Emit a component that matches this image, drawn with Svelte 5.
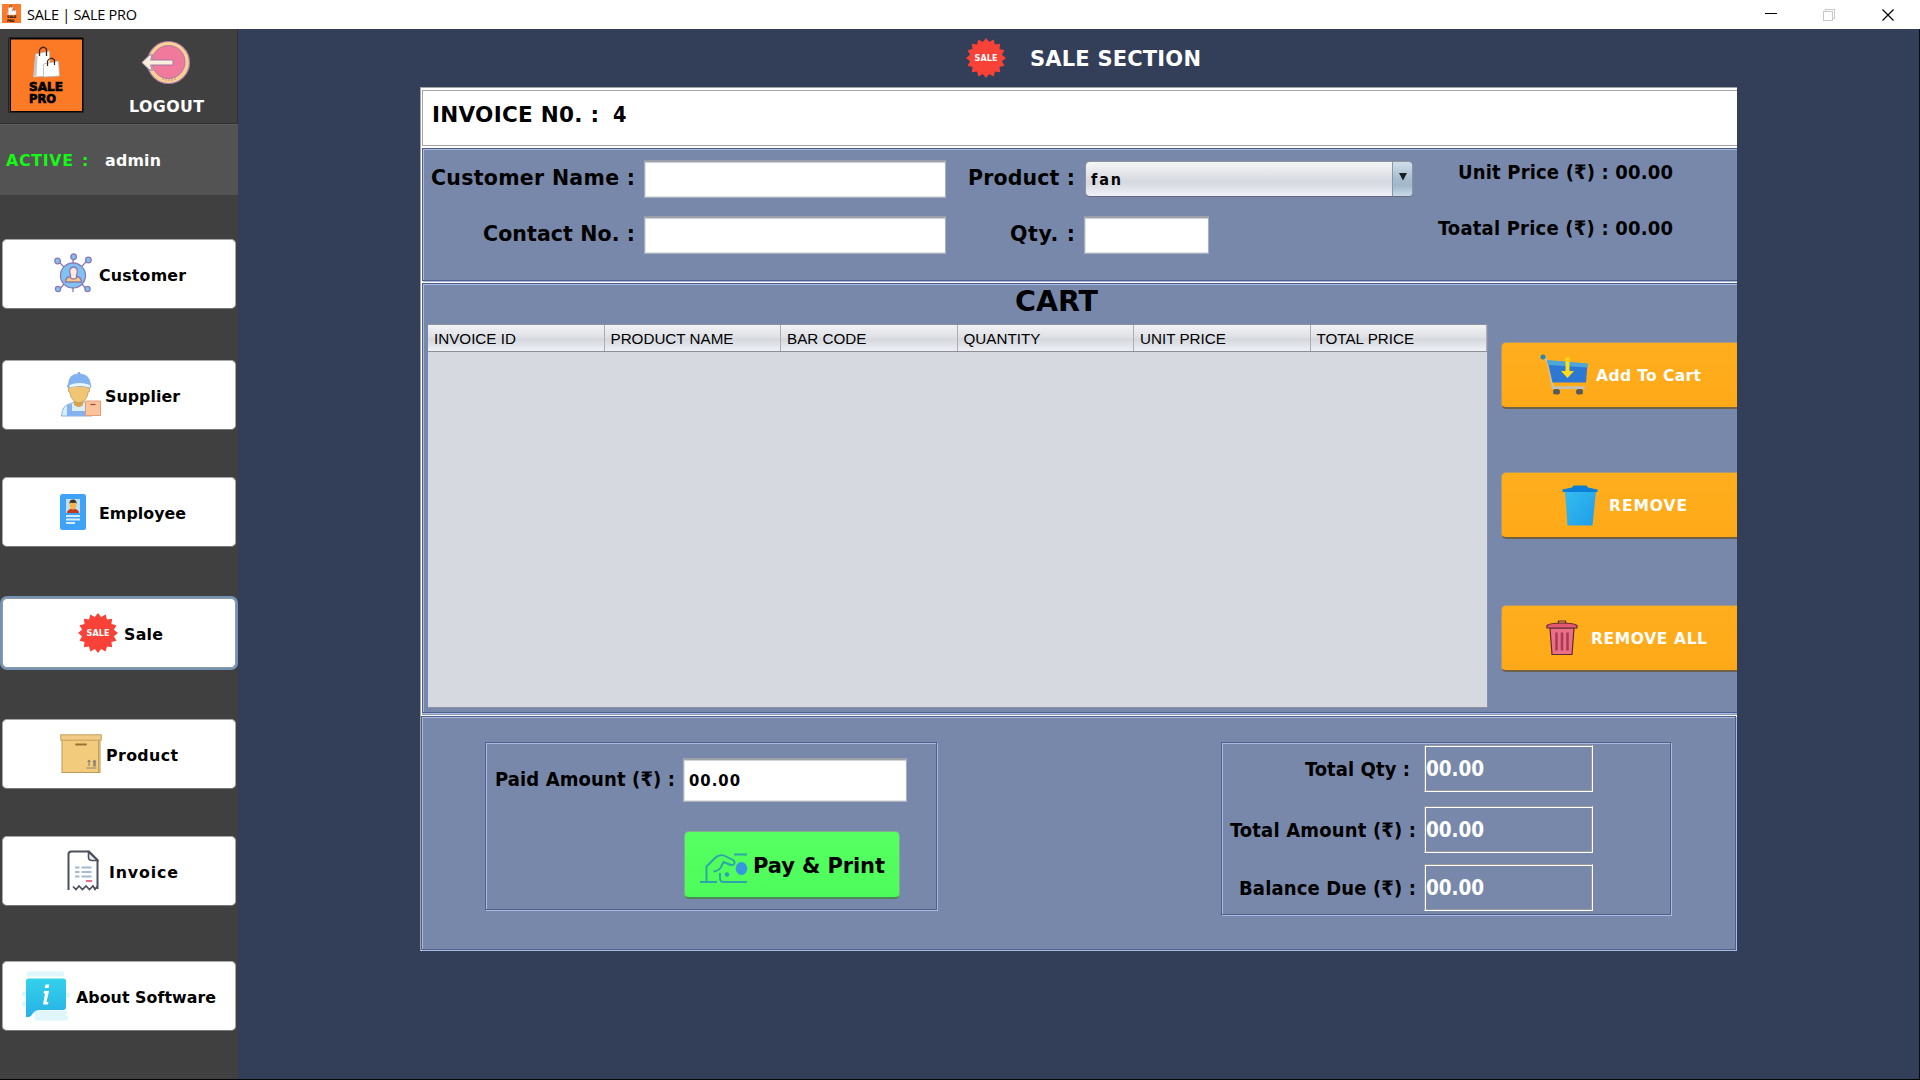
<script>
  const nav = [
    { id: 'customer', label: 'Customer', w: 87 },
    { id: 'supplier', label: 'Supplier', w: 75 },
    { id: 'employee', label: 'Employee', w: 87 },
    { id: 'sale', label: 'Sale', w: 39 },
    { id: 'product', label: 'Product', w: 72 },
    { id: 'invoice', label: 'Invoice', w: 69 },
    { id: 'about', label: 'About Software', w: 140 }
  ];
  const columns = ['INVOICE ID', 'PRODUCT NAME', 'BAR CODE', 'QUANTITY', 'UNIT PRICE', 'TOTAL PRICE'];
  const totals = [
    { label: 'Total Qty :', w: 105, cls: 'qty' },
    { label: 'Total Amount (₹) :', w: 186, cls: 'amount' },
    { label: 'Balance Due (₹) :', w: 177, cls: 'due' }
  ];

  // Spiked outline of the sale badge, centred on 20,20.
  const spikes = 16;
  const burst = Array.from({ length: spikes * 2 }, (_, i) => {
    const r = i % 2 ? 16.2 : 20;
    const a = (i * Math.PI) / spikes - Math.PI / 2;
    return `${(20 + r * Math.cos(a)).toFixed(2)},${(20 + r * Math.sin(a)).toFixed(2)}`;
  }).join(' ');

  // Tracks a label so that its text spans the given width.
  function fit(node, width) {
    const n = [...node.textContent].length - 1;
    const spacing = (width - node.getBoundingClientRect().width) / n;
    node.style.letterSpacing = `${spacing.toFixed(3)}px`;
    node.style.marginRight = `${(-spacing).toFixed(3)}px`;
  }
</script>

{#snippet bags()}
  <path d="M7 8 21 5l1 25-17 1z" fill="#fff" stroke="#b9b4b0" stroke-width=".8" />
  <path d="M5 30 7 9l2 1-1 20z" fill="#c9c4c0" />
  <path d="M11 10V4q3-5 7-1v7" fill="none" stroke="#3a2618" stroke-width="1.3" />
  <path d="M15 18 30 15l1 15-16 1z" fill="#fff" stroke="#b9b4b0" stroke-width=".8" />
  <path d="M19 20v-5q3-5 7-1v5" fill="none" stroke="#3a2618" stroke-width="1.2" />
{/snippet}

{#snippet badge()}
  <svg class="badge" viewBox="0 0 40 40">
    <polygon points={burst} fill="#f84237" />
    <text x="20" y="23.4" text-anchor="middle" textLength="23">SALE</text>
  </svg>
{/snippet}

{#snippet icon(id)}
  {#if id === 'customer'}
    <svg width="38" height="42" viewBox="0 0 38 42">
      <g stroke="#8a79b4" stroke-width="1.3" fill="#80c2f3">
        <path d="M5 9 11 15M19 6v6M33 8 27 14M10 31 5 37M28 31l5 6M19 34v5" />
        <circle cx="19" cy="22.5" r="12.5" />
        <circle cx="3.6" cy="8" r="2.8" /><circle cx="19.6" cy="3.8" r="2.8" /><circle cx="34.4" cy="7" r="2.8" />
        <circle cx="4" cy="36" r="2.6" /><circle cx="33.5" cy="36" r="2.6" />
        <path d="M11.5 29q0-5 5-5.500h6q5 .5 5 5.500z" fill="#fbc97e" />
        <path d="M16.500 22v3q3 2 6 0v-3q1.500-3 .5-6-3.500-4-7 0-1 3 .5 6z" fill="#fdeadb" />
      </g>
    </svg>
  {:else if id === 'supplier'}
    <svg width="40" height="46" viewBox="0 0 40 46">
      <path d="M.5 44Q1 34 8 32l6-2h9l8 3v11z" fill="#d9eefb" stroke="#8fb2d8" />
      <path d="M6 44V33l5-1v7h15v5z" fill="#84b1ef" />
      <path d="M13 27h9v6q-4 4-9 0z" fill="#d5a44c" />
      <path d="M7.500 14.500h21v5h-1q-1 7-5 10-4.500 3-9 0-4-3-5-10h-1z" fill="#f0c573" stroke="#b18a45" stroke-width=".6" />
      <path d="M7.500 12Q8 2 17 2V.5h2V2q9 0 10.500 10l.5 3-1.500 1q-10-4-21 0L6 14z" fill="#84b1ef" stroke="#6f9ad4" stroke-width=".5" />
      <path d="M8.500 13q10-4 20.500 0v2.500q-10-3-20.500 0z" fill="#eaf6fd" />
      <path d="M24.500 29h15v14.500h-15z" fill="#fcc39b" stroke="#e79b7c" />
      <path d="M29.500 32.500h5" stroke="#8f4c3d" stroke-width="1.200" />
    </svg>
  {:else if id === 'employee'}
    <svg width="29" height="38" viewBox="0 0 29 38">
      <rect x="2" y="1" width="26" height="36" rx="2.500" fill="#3ea2f7" />
      <rect x="8" y="6" width="14" height="14" fill="#c3dff6" />
      <path d="M9 20q0-4 6-4.500 6 .5 6 4.500z" fill="#c2391f" />
      <ellipse cx="15" cy="12" rx="3.300" ry="4.500" fill="#f7b44c" />
      <path d="M11.500 11q-.5-4.500 3.500-4.500t3.500 4.500l-1-1.500q-3 1-5 0z" fill="#3c3432" />
      <path d="M8 23h14M8 26.500h14M8 30h9" stroke="#d8edfc" stroke-width="1.800" />
    </svg>
  {:else if id === 'sale'}
    {@render badge()}
  {:else if id === 'product'}
    <svg width="42" height="40" viewBox="0 0 42 40">
      <rect x="2" y="1.500" width="38" height="37" fill="#f3cb7c" stroke="#bb9a5b" />
      <path d="M38.500 7v31" stroke="#c9a25a" />
      <rect x=".8" y=".8" width="40.400" height="5.400" fill="#f2cc85" stroke="#c49d5b" />
      <path d="M16 10.500h10" stroke="#9a7435" stroke-width="1.800" stroke-linecap="round" />
      <path d="M26.500 34h10M29 32v-6" stroke="#8c8574" stroke-width="1.200" />
      <path d="M34.500 32.500v-6" stroke="#8c8574" stroke-width="2.600" />
      <path d="m27 28 2-2.500 2 2.500zM32.500 28l2-2.500 2 2.500z" fill="#8c8574" />
    </svg>
  {:else if id === 'invoice'}
    <svg width="32" height="42" viewBox="0 0 32 42">
      <path d="M1.500 40V4q0-2.500 3-2.500H22l8.500 8.500v29" fill="none" stroke="#4b505c" stroke-width="2" />
      <path d="M21.500 2v5q0 3.500 3.500 3.500h5.500z" fill="#eceef1" stroke="#4b505c" stroke-width="1.600" />
      <path d="m6 36.500 3 3 3-3.500 3.500 3.500 3.500-3.500 3.500 3.500 3.500-3.500 2 3.500 2-3" fill="none" stroke="#4b505c" stroke-width="1.700" />
      <path d="M8 17.500h4.500M14.500 17.500h10M8 22h4.500M14.500 22h10M8 26.500h4.500M14.500 26.500h10" stroke="#a5bad0" stroke-width="2" />
      <path d="M19 31h6" stroke="#ef5a77" stroke-width="1.800" />
    </svg>
  {:else if id === 'about'}
    <svg width="48" height="50" viewBox="0 0 48 50">
      <defs>
        <linearGradient id="bubble" x1="0" y1="0" x2="0" y2="1">
          <stop offset="0" stop-color="#34d2ea" /><stop offset="1" stop-color="#28b0e6" />
        </linearGradient>
      </defs>
      <path d="M7 3h33M2 23h10M2 33h10M38 24h8M13 42h30M15 47h29" stroke="#dff6fd" stroke-width="5" stroke-linecap="round" />
      <path d="M4 10q0-2.500 2.500-2.500h35Q44 7.500 44 10v26q0 3-3 3H17q-5 0-8 6-2 1.500-5 1z" fill="url(#bubble)" />
      <path d="M23.500 13.500h3.800l-.8 3.500h-3.800zM22 20h5l-2.500 11h2l-.5 2.500h-5l2-11h-1.500z" fill="#fff" />
    </svg>
  {:else if id === 'logout'}
    <svg width="50" height="46" viewBox="0 0 50 46">
      <circle cx="27.500" cy="22.500" r="21" fill="#fbd095" stroke="#a77ca6" stroke-width="1.200" />
      <circle cx="27.500" cy="22" r="16.500" fill="#f17a9c" stroke="#a77ca6" />
      <path d="M22 37v3M25 38v3M28 38v3M31 38v3M34 37v3" stroke="#c08a8f" />
      <path d="M.8 22.500 8 15.500l3.500-1L9.500 20H32v5H9.500l2 5.500-3.500-1z" fill="#fdeedd" stroke="#9a7ba8" />
    </svg>
  {:else if id === 'cart'}
    <svg width="49" height="42" viewBox="0 0 49 42">
      <path d="M3 3 8 8l5 26h31" fill="none" stroke="#c8c4ae" stroke-width="2.200" />
      <path d="M7.500 6.500 47.500 10 46 28.500H12.500z" fill="#2c78d3" />
      <path d="M7 6 48 9.500l-.5 4L8 11z" fill="#4da7d8" />
      <circle cx="3" cy="3" r="2.500" fill="#2a86b8" />
      <path d="M25.500 3.500h4V17h4.500l-6.500 7-6.500-7h4.500z" fill="#ffdc16" />
      <path d="M12 33.500h33" stroke="#bfc0b4" stroke-width="2.400" />
      <rect x="13" y="35" width="7" height="5.500" rx="2.500" fill="#555c5c" /><rect x="36" y="35" width="7" height="5.500" rx="2.500" fill="#555c5c" />
    </svg>
  {:else if id === 'bin'}
    <svg width="36" height="41" viewBox="0 0 36 41">
      <defs>
        <linearGradient id="can" x1="0" y1="0" x2="1" y2="1">
          <stop offset="0" stop-color="#34bdf0" /><stop offset="1" stop-color="#1f9de8" />
        </linearGradient>
      </defs>
      <path d="M3 6h31l-3.500 34.500h-25z" fill="url(#can)" />
      <path d="M.5 4.500 10 2.500 11.500.5h13l1.500 2 9.500 2V7H.5z" fill="#0a7fd6" />
    </svg>
  {:else if id === 'trash'}
    <svg width="32" height="36" viewBox="0 0 32 36">
      <path d="M4 8h24l-2 26.500H6z" fill="#ec6f88" stroke="#5b2a35" stroke-width="1.200" />
      <path d="M10.500 12.500v18M16 12.500v18M21.500 12.500v18" stroke="#a93c55" stroke-width="2.600" />
      <path d="M1 5.500q3-2.500 15-2.500t15 2.500V8H1z" fill="#e5586f" stroke="#5b2a35" stroke-width="1.200" />
      <path d="M12.500 3V1h7v2" fill="none" stroke="#5b2a35" stroke-width="1.200" />
    </svg>
  {:else if id === 'pay'}
    <svg width="48" height="31" viewBox="0 0 48 31" fill="none" stroke="#2da5a8" stroke-width="1.900">
      <path d="M0 29h17M6.500 29V13.500L15 5q5-4.500 10-2l8 4q3 2 .5 4.500-1.500 1-4 0l-6-2.500-3 6q-2.500 3-7 3.500" />
      <path d="M34 1.500h13M20 20v5q0 4 3.500 4H47" />
      <ellipse cx="41.500" cy="15.500" rx="5.800" ry="6.500" fill="#3598dc" stroke="none" />
      <circle cx="27" cy="21.500" r="2.200" fill="#2e9dc0" stroke="none" />
    </svg>
  {/if}
{/snippet}

<div class="window">
  <header class="titlebar">
    <svg class="app-icon" viewBox="0 0 38 38">
      <rect width="38" height="38" fill="#fb7a2b" />
      <g transform="translate(8 2) scale(.65)">{@render bags()}</g>
      <text x="10" y="28" textLength="19">SALE</text><text x="10" y="35" textLength="15">PRO</text>
    </svg>
    <span class="caption"><span class="fit" use:fit={110}>SALE | SALE PRO</span></span>
    <svg class="controls" width="127" height="28" viewBox="0 0 127 28" fill="none" shape-rendering="crispEdges">
      <path d="M0 12.500h12" stroke="#000" />
      <path d="M58.500 10.500h9v9h-9zM60.500 10.500v-2h9v9h-2" stroke="#c8c8c8" />
      <path d="m117.500 8.500 11 11m0-11-11 11" stroke="#000" stroke-width="1.200" shape-rendering="auto" />
    </svg>
  </header>

  <div class="body">
    <aside>
      <div class="brand">
        <svg class="logo" width="76" height="76" viewBox="0 0 76 76">
          <rect x=".5" y=".5" width="75" height="75" fill="#050505" />
          <path d="M1.500 1v74" stroke="#555" stroke-width=".7" />
          <rect x="3" y="2.500" width="71" height="71.500" fill="#fc7a26" />
          <g transform="translate(20.500 9)">{@render bags()}</g>
          <text x="21" y="53.500" textLength="34" lengthAdjust="spacingAndGlyphs">SALE</text>
          <text x="21" y="65.500" textLength="27" lengthAdjust="spacingAndGlyphs">PRO</text>
        </svg>
        <div class="logout">
          {@render icon('logout')}
          <span class="fit" use:fit={75}>LOGOUT</span>
        </div>
      </div>
      <div class="active">
        <span class="state"><span class="fit" use:fit={67}>ACTIVE</span></span>
        <span class="state colon">:</span>
        <span class="fit" use:fit={56}>admin</span>
      </div>
      <nav>
        {#each nav as item}
          <button class="nav-item {item.id}" class:focused={item.id === 'sale'}>
            <span class="nav-icon">{@render icon(item.id)}</span>
            <span class="fit" use:fit={item.w}>{item.label}</span>
          </button>
        {/each}
      </nav>
    </aside>

    <main>
      <div class="heading">
        {@render badge()}
        <span class="fit" use:fit={171}>SALE SECTION</span>
      </div>

      <div class="panel">
        <section class="invoice-no">
          <span class="fit" use:fit={167}>INVOICE N0. :</span>
          <span class="number">4</span>
        </section>

        <section class="form etched">
          <div class="fields">
            <div class="row">
              <label class="c1" for="name"><span class="fit" use:fit={204}>Customer Name :</span></label>
              <input id="name" class="wide" />
              <label class="c2" for="prod"><span class="fit" use:fit={107}>Product :</span></label>
              <div class="combo" id="prod">
                <span class="value"><span class="fit" use:fit={30}>fan</span></span>
                <span class="arrow"><svg width="8" height="8" viewBox="0 0 8 8"><path d="M0 0h8L4 7.500z" fill="#1a1c20" /></svg></span>
              </div>
            </div>
            <div class="row">
              <label class="c1" for="contact"><span class="fit" use:fit={152}>Contact No. :</span></label>
              <input id="contact" class="wide" />
              <label class="c2" for="qty"><span class="fit" use:fit={65}>Qty. :</span></label>
              <input id="qty" class="small" />
            </div>
          </div>
          <div class="prices">
            <div><span class="fit" use:fit={215}>Unit Price (₹) : 00.00</span></div>
            <div><span class="fit" use:fit={235}>Toatal Price (₹) : 00.00</span></div>
          </div>
        </section>

        <section class="cart etched">
          <div class="cart-main">
            <h2><span class="fit" use:fit={83}>CART</span></h2>
            <div class="table">
              <div class="thead">
                {#each columns as c}<span>{c}</span>{/each}
              </div>
            </div>
          </div>
          <div class="actions">
            <button class="act add">{@render icon('cart')}<span class="fit" use:fit={105}>Add To Cart</span></button>
            <button class="act remove">{@render icon('bin')}<span class="fit" use:fit={78}>REMOVE</span></button>
            <button class="act all">{@render icon('trash')}<span class="fit" use:fit={116}>REMOVE ALL</span></button>
          </div>
        </section>

        <section class="summary etched">
          <div class="pay etched">
            <div class="pay-row">
              <label for="paid"><span class="fit" use:fit={180}>Paid Amount (₹) :</span></label>
              <div class="paid-input" id="paid"><span class="fit" use:fit={51}>00.00</span></div>
            </div>
            <button class="print">{@render icon('pay')}<span class="fit" use:fit={132}>Pay &amp; Print</span></button>
          </div>
          <div class="totals etched">
            {#each totals as t}
              <div class="total {t.cls}">
                <span class="label"><span class="fit" use:fit={t.w}>{t.label}</span></span>
                <span class="box"><span class="fit" use:fit={58}>00.00</span></span>
              </div>
            {/each}
          </div>
        </section>
      </div>
    </main>
  </div>
</div>

<style>
  :global(body) { margin: 0; overflow: hidden; }
  .window {
    width: 1920px; height: 1080px; overflow: hidden; display: flex; flex-direction: column;
    font-family: 'DejaVu Sans', sans-serif; font-weight: 700;
    color: #000; background: #333e58; border-bottom: 1px solid #050505;
  }
  .window *, .window { box-sizing: border-box; }
  svg { flex: none; display: block; }
  button { font: inherit; padding: 0; cursor: pointer; }
  .fit { display: inline-block; white-space: nowrap; flex: none; }

  .titlebar { height: 29px; flex: none; background: #fff; display: flex; align-items: center; font: 400 14.500px 'Open Sans', 'Noto Sans', sans-serif; }
  .app-icon { width: 19px; height: 19px; margin: 0 6px 2px 2px; }
  .app-icon text { font: 700 7px 'DejaVu Sans', sans-serif; }
  .caption { line-height: 28px; flex: 1; }
  .controls { margin-right: 28px; overflow: visible; }

  .body { flex: 1; display: flex; min-height: 0; }
  aside { width: 238px; flex: none; background: #404040; display: flex; flex-direction: column; font-size: 15.800px; }
  .brand { height: 95px; display: flex; padding: 8px 0 0 8px; border: solid #303030; border-width: 0 1px 1px 0; color: #fff; }
  .logo text { font: 700 12.500px 'DejaVu Sans', sans-serif; stroke: #000; stroke-width: .7px; }
  .logout { margin: 2px 0 0 45px; display: flex; flex-direction: column; align-items: flex-start; line-height: 20px; }
  .logout svg { margin: 1px 0 11px 12px; }
  .active { height: 71px; background: #535353; border-top: 1px solid #5b5b5b; display: flex; padding: 1px 0 0 6px; align-items: center; color: #fff; line-height: 20px; }
  .state { color: #14f914; }
  .colon { width: 32px; padding-left: 9px; }
  nav { flex: 1; display: grid; grid-template-rows: 121px 117px 121px 121px 117px 125px 70px; padding: 44px 2px 0 2px; align-items: start; }
  .nav-item { height: 70px; width: 234px; background: #fff; border: 1px solid #a7a7a7; border-bottom-color: #777; border-radius: 5px; display: flex; align-items: center; line-height: 20px; }
  .nav-item > .fit { padding-top: 4px; }
  .nav-icon { display: flex; flex: none; }
  .focused { border-color: #8e9aa6; box-shadow: 0 0 0 2px #7393b5; }
  .customer .nav-icon { width: 45px; } .customer { padding-left: 51px; }
  .supplier .nav-icon { width: 44px; } .supplier { padding-left: 58px; }
  .employee .nav-icon { width: 41px; } .employee { padding-left: 55px; }
  .sale .nav-icon { width: 46px; } .sale { padding-left: 75px; }
  .product .nav-icon { width: 46px; } .product { padding-left: 57px; }
  .invoice .nav-icon { width: 42px; } .invoice { padding-left: 64px; }
  .about .nav-icon { width: 54px; } .about { padding-left: 19px; }
  .badge { width: 40px; height: 40px; }
  .badge text { font: 700 9px 'DejaVu Sans Condensed', 'DejaVu Sans', sans-serif; fill: #fff; }

  main { flex: 1; padding-left: 182px; border-right: 1px solid #0b0d12; }
  .heading { height: 58px; display: flex; align-items: center; gap: 24px; padding-left: 546px; color: #fff; font-size: 21px; line-height: 30px; }
  .heading .fit { padding-top: 2px; }

  .panel { width: 1317px; height: 864px; overflow: hidden; background: #fff; border: solid #a3a3a3; border-width: 1px 0 0 1px; padding: 2px 0 0 1px; display: flex; flex-direction: column; }
  .etched { border: 1px solid #4e5f8a; box-shadow: inset 1px 1px #a9bae2, 1px 1px #a9bae2; background: #7888aa; }
  .invoice-no { height: 56px; flex: none; border: solid #a3a3a3; border-width: 1px 0 1px 1px; margin-bottom: 2px; display: flex; gap: 14px; font-size: 21.500px; line-height: 26px; padding: 11px 0 0 9px; }
  .number { font-family: 'DejaVu Sans Condensed', 'DejaVu Sans', sans-serif; }

  .form { height: 133px; flex: none; border-right: 0; display: flex; justify-content: space-between; padding: 11px 64px 0 0; margin-bottom: 2px; }
  .fields { display: flex; flex-direction: column; gap: 19px; font-size: 20.500px; }
  .row { height: 37px; display: flex; align-items: center; }
  .row label { display: flex; justify-content: flex-end; line-height: 37px; height: 37px; padding-right: 9px; }
  .c1 { width: 221px; }
  .c2 { width: 138px; }
  input, .paid-input { border: 1px solid #a9afbd; border-top: 2px solid #9ea1aa; background: #fff; box-shadow: inset 0 1px 1px #ccd0d6, inset 0 -1px #e0e2e6, inset 1px 0 #dfe1e6; outline: 0; padding: 0; border-radius: 0; }
  .wide { width: 302px; height: 38px; }
  .small { width: 125px; height: 38px; }
  .combo { width: 328px; height: 36px; margin-left: 1px; border-radius: 5px; display: flex; overflow: hidden; border: 1px solid #8e939e; border-bottom-color: #626b7c; background: linear-gradient(#f5f6f8, #e2e4e8 35%, #d5d8df 60%, #eff1f7); font-size: 16px; }
  .value { flex: 1; padding-left: 5px; line-height: 36px; }
  .arrow { width: 20px; border-left: 1px solid #8499ab; background: linear-gradient(#d2dfea, #a6bcce 50%, #a2b9cb 70%, #c7dbea); display: flex; justify-content: center; padding-top: 11px; }
  .prices, .pay-row, .totals, .value { font-family: 'DejaVu Sans Condensed', 'DejaVu Sans', sans-serif; font-stretch: condensed; }
  .prices { font-size: 20px; line-height: 30px; display: flex; flex-direction: column; gap: 26px; align-items: flex-end; margin-top: -3px; }

  .cart { height: 430px; flex: none; border-right: 0; display: flex; margin-bottom: 3px; box-shadow: inset 1px 1px #a9bae2, 0 1px #a9bae2, 0 2px #8b97b3; }
  .cart-main { width: 1060px; margin-left: 5px; }
  h2 { margin: 0; font-size: 28.500px; line-height: 36px; height: 40px; padding-left: 587px; }
  .table { height: 384px; background: #d6d9df; border: solid #8b91a0; border-width: 1px 1px 1px 0; }
  .thead { height: 27px; display: grid; grid-template-columns: repeat(6, 176.500px); border-bottom: 1px solid #8b8f99; background: linear-gradient(#f2f3f5, #dfe1e5 45%, #d5d8de 55%, #eef0f5); font: 400 15.200px/27px 'Liberation Sans', Arial, sans-serif; overflow: hidden; }
  .thead span { padding-left: 6px; border-right: 1px solid #a9adb7; }
  .actions { padding: 58px 0 0 13px; display: grid; grid-template-rows: 130px 133px 67px; align-content: start; flex: 1; }
  .act { width: 252px; height: 67px; border: 1px solid #a89a76; border-bottom: 2px solid #6f6048; border-radius: 5px; background: linear-gradient(#ffae1e, #ffa918); color: #fff; display: flex; align-items: center; font-size: 15.500px; }
  .act .fit { padding-top: 2px; }
  .add { padding-left: 38px; gap: 7px; }
  .remove { padding-left: 60px; gap: 11px; }
  .all { padding-left: 44px; gap: 13px; }

  .summary { height: 234px; width: 1315px; flex: none; margin-left: -1px; display: flex; justify-content: space-between; padding: 25px 64px 0 63px; font-size: 20px; }
  .pay { width: 452px; height: 168px; padding: 15px 0 0 9px; }
  .pay-row { display: flex; height: 45px; margin-bottom: 28px; }
  .pay-row label { width: 188px; line-height: 42px; }
  .paid-input { width: 224px; height: 44px; padding-left: 5px; font-size: 16.500px; line-height: 41px; }
  .print { margin-left: 189px; width: 216px; height: 68px; border: 1px solid #7fae8a; border-bottom: 2px solid #4a8a5a; border-radius: 5px; background: linear-gradient(#56ff62, #4dfc5a); display: flex; align-items: center; gap: 5px; padding-left: 15px; font-size: 21px; }
  .print .fit { padding-top: 2px; }
  .print svg { margin-top: 7px; }
  .totals { width: 450px; height: 173px; padding-top: 2px; display: grid; grid-template-rows: 61px 58px 47px; }
  .total { display: flex; height: 47px; line-height: 48px; }
  .label { width: 194px; display: flex; justify-content: flex-end; }
  .box { margin-left: 8px; width: 169px; border: 1px solid #9a9a9a; border-right-color: #fff; border-bottom-color: #fff; box-shadow: inset 1px 1px #fff, inset -1px -1px #9a9a9a; color: #fff; padding-left: 1px; line-height: 46px; font-size: 20.500px; }
  .qty .label { padding-right: 6px; }
  .qty .box { margin-left: 8px; }
</style>
